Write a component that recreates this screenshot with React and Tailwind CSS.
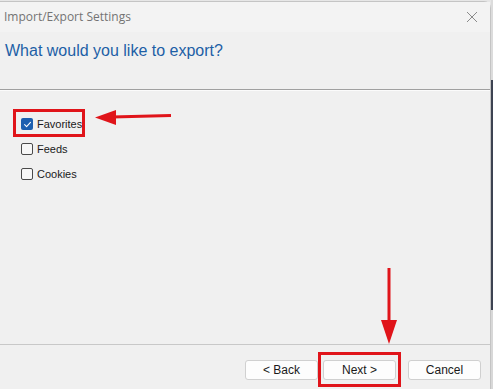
import React from "react";

const OPTIONS = [
  { id: "favorites", label: "Favorites", checked: true },
  { id: "feeds", label: "Feeds", checked: false },
  { id: "cookies", label: "Cookies", checked: false },
];

function CheckBox({ checked }) {
  if (checked) {
    return (
      <span className="flex h-[12px] w-[12px] items-center justify-center rounded-[2px] bg-[#1b5fb0]">
        <svg width="9" height="9" viewBox="0 0 10 10" fill="none">
          <path d="M1.8 5.2 L4 7.3 L8.3 2.6" stroke="#fff" strokeWidth="1.2" strokeLinecap="round" strokeLinejoin="round" />
        </svg>
      </span>
    );
  }
  return <span className="h-[12px] w-[12px] rounded-[2px] border border-[#4a4a4a] bg-[#f7f7f7]" />;
}

function DialogButton({ children, className = "" }) {
  return (
    <button
      className={`flex h-[20px] w-[73px] items-center justify-center rounded-[3px] border border-[#d0d0d0] bg-[#fdfdfd] text-[12px] text-[#1a1a1a] ${className}`}
    >
      {children}
    </button>
  );
}

export default function App() {
  return (
    <div
      className="relative flex h-[389px] w-[493px] overflow-hidden bg-[#e6e6e6]"
      style={{ fontFamily: '"Liberation Sans", Arial, sans-serif' }}
    >
      {/* dialog window */}
      <div className="mt-[1px] flex w-[491px] flex-col rounded-tr-[7px] border-t border-r border-[#c4c4c4] bg-[#f0f0f0]">
        {/* title bar */}
        <div className="flex h-[30px] items-center justify-between bg-[#f3f3f3] pl-[4px] pr-[12px]">
          <span className="text-[12px] text-[#737373]" style={{ fontFamily: '"Open Sans", sans-serif' }}>
            Import/Export Settings
          </span>
          <svg width="12" height="12" viewBox="0 0 12 12">
            <path d="M1 1 L11 11 M11 1 L1 11" stroke="#8a8a8a" strokeWidth="1" />
          </svg>
        </div>

        {/* header */}
        <div className="h-[58px] border-b border-[#a0a0a0] pl-[5px] pt-[9px]">
          <h1 className="text-[16px] leading-[20px] text-[#1d5fa6]">What would you like to export?</h1>
        </div>
        <div className="h-px bg-[#fbfbfb]" />

        {/* options */}
        <div className="flex flex-1 flex-col gap-[13px] pl-[21px] pt-[27px]">
          {OPTIONS.map((o) => (
            <label key={o.id} className="flex h-[12px] items-center gap-[4px] text-[11px] text-[#1a1a1a]">
              <CheckBox checked={o.checked} />
              <span>{o.label}</span>
            </label>
          ))}
        </div>

        {/* footer */}
        <div className="flex h-[45px] items-start justify-end border-t border-[#c8c8c8] pr-[9px] pt-[15px]">
          <DialogButton>&lt; Back</DialogButton>
          <DialogButton className="ml-[5px]">Next &gt;</DialogButton>
          <DialogButton className="ml-[12px]">Cancel</DialogButton>
        </div>
      </div>

      {/* background window edge on the right */}
      <div className="flex w-[2px] flex-col">
        <div className="h-[80px] bg-[#dcdcdc]" />
        <div className="h-[230px] bg-[#3d4352]" />
        <div className="flex-1 bg-[#d8d8d8]" />
      </div>

      {/* annotations */}
      <div className="absolute left-[13px] top-[109px] h-[28px] w-[72px] border-[3px] border-[#e0141a]" />
      <svg className="absolute left-[94px] top-[108px]" width="80" height="20" viewBox="0 0 80 20">
        <line x1="18" y1="9" x2="77" y2="7.5" stroke="#e0141a" strokeWidth="3" />
        <polygon points="1,9.5 22,2 22,17" fill="#e0141a" />
      </svg>
      <div className="absolute left-[318px] top-[352px] h-[35px] w-[83px] border-[3px] border-[#e0141a]" />
      <svg className="absolute left-[378px] top-[266px]" width="22" height="80" viewBox="0 0 22 80">
        <line x1="11" y1="2" x2="11" y2="60" stroke="#e0141a" strokeWidth="3" />
        <polygon points="11,78 3,54 19,54" fill="#e0141a" />
      </svg>
    </div>
  );
}
